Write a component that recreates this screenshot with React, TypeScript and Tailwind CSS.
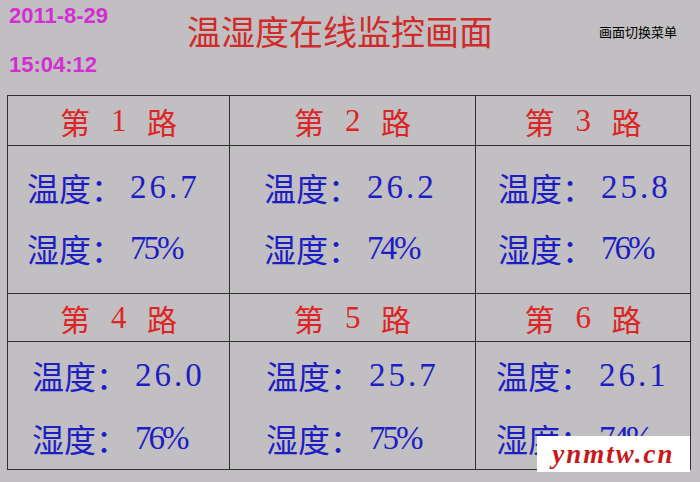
import React from "react";

type Cell = { n: number; t: string; h: string; pl: string };

const top: Cell[] = [
  { n: 1, t: "26.7", h: "75%", pl: "pl-[19px]" },
  { n: 2, t: "26.2", h: "74%", pl: "pl-[34px]" },
  { n: 3, t: "25.8", h: "76%", pl: "pl-[22px]" },
];
const bottom: Cell[] = [
  { n: 4, t: "26.0", h: "76%", pl: "pl-[24px]" },
  { n: 5, t: "25.7", h: "75%", pl: "pl-[36px]" },
  { n: 6, t: "26.1", h: "74%", pl: "pl-[20px]" },
];

const cjk = "font-['Noto_Sans_CJK_SC','Noto_Sans',sans-serif]";
const serif = "font-['Liberation_Serif','Noto_Sans_CJK_SC',serif]";

function Header({ n, last }: { n: number; last: boolean }) {
  return (
    <div
      className={`flex items-center justify-center gap-[21px] border-b border-[#2f2f2f] text-[#dd2525] ${
        last ? "" : "border-r"
      }`}
    >
      <span className={`w-[30px] text-[30px] leading-[30px] ${cjk}`}>第</span>
      <span className={`w-[15px] text-center text-[31px] leading-[30px] ${serif}`}>{n}</span>
      <span className={`w-[30px] text-[30px] leading-[30px] ${cjk}`}>路</span>
    </div>
  );
}

function Line({ label, value, pct }: { label: string; value: string; pct?: boolean }) {
  return (
    <div className="flex h-[40px] items-center text-[#1d1dc4]">
      <span className={`text-[32px] leading-[40px] ${cjk}`}>{label}</span>
      <span
        className={`ml-[7px] text-[33px] leading-[40px] ${serif} ${
          pct ? "tracking-[-3px]" : "tracking-[3px]"
        }`}
      >
        {value}
      </span>
    </div>
  );
}

function Data({ c, last, bottomRow }: { c: Cell; last: boolean; bottomRow: boolean }) {
  return (
    <div
      className={`flex flex-col border-[#2f2f2f] ${c.pl} ${last ? "" : "border-r"} ${
        bottomRow ? "gap-[23px] pt-[13px]" : "gap-[21px] border-b pt-[21px]"
      }`}
    >
      <Line label="温度：" value={c.t} />
      <Line label="湿度：" value={c.h} pct />
    </div>
  );
}

export default function App() {
  return (
    <div className="relative h-[482px] w-[700px] overflow-hidden bg-[#c1bfc1]">
      {/* header */}
      <div className="flex h-[95px] items-start">
        <div className="flex w-[187px] flex-col pl-[9px] pt-[5px] font-['Liberation_Sans',Arial,sans-serif] text-[22px] font-bold leading-[22px] text-[#d22fd2]">
          <span>2011-8-29</span>
          <span className="mt-[27px]">15:04:12</span>
        </div>
        <div className={`mt-[14px] text-[34px] leading-[34px] text-[#d02a2a] ${cjk}`}>
          温湿度在线监控画面
        </div>
        <div className={`ml-[106px] mt-[24px] text-[13px] leading-[16px] text-black ${cjk}`}>
          画面切换菜单
        </div>
      </div>

      {/* table */}
      <div className="ml-[7px] grid w-[684px] grid-cols-[222px_246px_1fr] grid-rows-[50px_148px_48px_127px] border border-[#2f2f2f]">
        {top.map((c, i) => (
          <Header key={`h${c.n}`} n={c.n} last={i === 2} />
        ))}
        {top.map((c, i) => (
          <Data key={`d${c.n}`} c={c} last={i === 2} bottomRow={false} />
        ))}
        {bottom.map((c, i) => (
          <Header key={`h${c.n}`} n={c.n} last={i === 2} />
        ))}
        {bottom.map((c, i) => (
          <Data key={`d${c.n}`} c={c} last={i === 2} bottomRow />
        ))}
      </div>

      {/* watermark */}
      <div className="absolute left-[537px] top-[436px] flex h-[36px] w-[153px] items-center justify-center bg-white">
        <span className="font-['Liberation_Serif',serif] text-[27px] font-bold italic leading-[30px] tracking-[2px] text-[#c81818]">
          ynmtw.cn
        </span>
      </div>
    </div>
  );
}
